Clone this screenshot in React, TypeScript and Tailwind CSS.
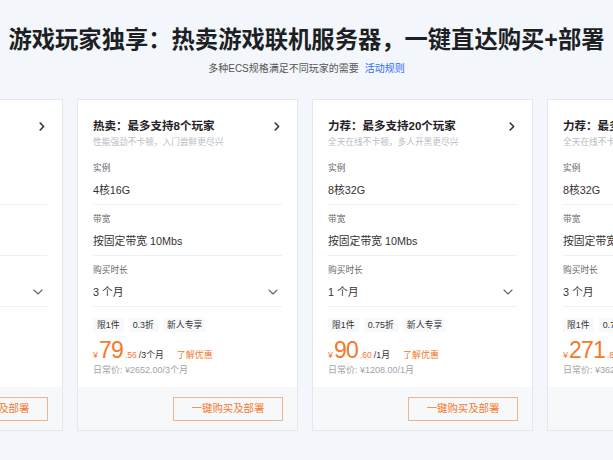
import React from "react";

type Card = {
  title: string;
  sub: string;
  inst: string;
  bw: string;
  dur: string;
  tags: string[];
  price: string;
  dec: string;
  unit: string;
  orig: string;
};

const cards: Card[] = [
  {
    title: "入门：最多支持4个玩家",
    sub: "轻量畅玩不卡顿，入门尝鲜更尽兴",
    inst: "2核8G",
    bw: "按固定带宽 5Mbs",
    dur: "3 个月",
    tags: ["限1件", "0.3折", "新人专享"],
    price: "39",
    dec: ".78",
    unit: "/3个月",
    orig: "日常价: ¥1326.00/3个月",
  },
  {
    title: "热卖：最多支持8个玩家",
    sub: "性能强劲不卡顿，入门尝鲜更尽兴",
    inst: "4核16G",
    bw: "按固定带宽 10Mbs",
    dur: "3 个月",
    tags: ["限1件", "0.3折", "新人专享"],
    price: "79",
    dec: ".56",
    unit: "/3个月",
    orig: "日常价: ¥2652.00/3个月",
  },
  {
    title: "力荐：最多支持20个玩家",
    sub: "全天在线不卡顿，多人开黑更尽兴",
    inst: "8核32G",
    bw: "按固定带宽 10Mbs",
    dur: "1 个月",
    tags: ["限1件", "0.75折", "新人专享"],
    price: "90",
    dec: ".60",
    unit: "/1月",
    orig: "日常价: ¥1208.00/1月",
  },
  {
    title: "力荐：最多支持20个玩家",
    sub: "全天在线不卡顿，多人开黑更尽兴",
    inst: "8核32G",
    bw: "按固定带宽 10Mbs",
    dur: "3 个月",
    tags: ["限1件", "0.75折", "新人专享"],
    price: "271",
    dec: ".80",
    unit: "/3个月",
    orig: "日常价: ¥3624.00/3个月",
  },
];

function ChevronRight() {
  return (
    <svg width="6" height="9" viewBox="0 0 6 9" className="mr-[2px]">
      <path d="M1.2 1l3.4 3.5L1.2 8" fill="none" stroke="#333" strokeWidth="1.6" strokeLinecap="round" strokeLinejoin="round" />
    </svg>
  );
}

function ChevronDown() {
  return (
    <svg width="10" height="6" viewBox="0 0 10 6" className="mr-[4px]">
      <path d="M1 1l4 4 4-4" fill="none" stroke="#666" strokeWidth="1.1" strokeLinecap="round" strokeLinejoin="round" />
    </svg>
  );
}

function Block({ label, value, right }: { label: string; value: string; right?: React.ReactNode }) {
  return (
    <div className="pt-[8px] pb-[6px] border-b border-[#eef0f3]">
      <div className="text-[8.7px] leading-[12px] text-[#666]">{label}</div>
      <div className="mt-[8px] flex items-center justify-between">
        <span className="text-[10.8px] leading-[16px] text-[#333]">{value}</span>
        {right}
      </div>
    </div>
  );
}

function ProductCard({ c }: { c: Card }) {
  return (
    <div className="flex-none w-[221px] h-[332px] bg-white border border-[#e4e8ee] flex flex-col">
      <div className="flex-1 px-[15px] pt-[18px]">
        <div className="flex items-center justify-between">
          <span className="text-[11.5px] leading-[16px] font-bold text-[#1f2226] whitespace-nowrap">{c.title}</span>
          <ChevronRight />
        </div>
        <div className="mt-[2px] text-[8.7px] leading-[12px] text-[#b8bcc4] whitespace-nowrap">{c.sub}</div>
        <div className="mt-[6px]">
          <Block label="实例" value={c.inst} />
          <Block label="带宽" value={c.bw} />
          <Block label="购买时长" value={c.dur} right={<ChevronDown />} />
        </div>
        <div className="mt-[11px] flex gap-[5px] h-[14px]">
          {c.tags.map((t) => (
            <span key={t} className="px-[4px] bg-[#f8f9fa] text-[8.9px] leading-[14px] text-[#333]">
              {t}
            </span>
          ))}
        </div>
        <div className="mt-[6px] flex items-baseline h-[24px] whitespace-nowrap">
          <span className="text-[9px] text-[#f5782b]">¥</span>
          <span className="ml-[1px] text-[23px] leading-[24px] text-[#f5782b] tracking-[-0.8px]">{c.price}</span>
          <span className="ml-[2px] text-[8.5px] text-[#f5782b]">{c.dec}</span>
          <span className="ml-[2px] text-[8.8px] text-[#333]">{c.unit}</span>
          <span className="ml-[13px] text-[9px] text-[#f5782b]">了解优惠</span>
        </div>
        <div className="mt-[2px] text-[9px] leading-[12px] text-[#a0a4ab] whitespace-nowrap">{c.orig}</div>
      </div>
      <div className="h-[43px] bg-[#f7f8fa] flex items-center justify-end px-[14px]">
        <button className="w-[110px] h-[24px] border border-[#eab690] text-[#f5782b] text-[10.4px] leading-[22px] bg-transparent">
          一键购买及部署
        </button>
      </div>
    </div>
  );
}

export default function App() {
  return (
    <div
      className="w-[613px] h-[460px] bg-[#f3f6fa] overflow-hidden"
      style={{ fontFamily: '"Liberation Sans", "Noto Sans CJK SC", sans-serif' }}
    >
      <h1 className="pt-[24px] text-center text-[23.3px] leading-[32px] font-bold text-[#1c1f23] whitespace-nowrap">
        游戏玩家独享：热卖游戏联机服务器，一键直达购买+部署
      </h1>
      <p className="mt-[6px] text-center text-[10px] leading-[14px] text-[#555]">
        多种ECS规格满足不同玩家的需要
        <span className="ml-[6px] text-[#2f6bff]">活动规则</span>
      </p>
      <div className="mt-[23px] -ml-[158px] flex gap-[14px]">
        {cards.map((c, i) => (
          <ProductCard key={i} c={c} />
        ))}
      </div>
    </div>
  );
}
